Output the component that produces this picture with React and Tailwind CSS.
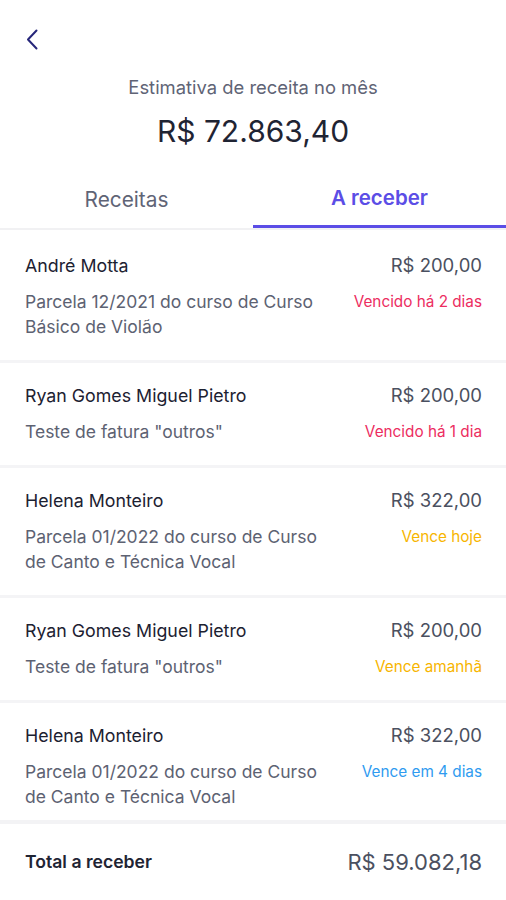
import React from "react";

const rows = [
  {
    name: "André Motta",
    amount: "R$ 200,00",
    desc: "Parcela 12/2021 do curso de Curso Básico de Violão",
    status: "Vencido há 2 dias",
    color: "text-[#ec2d5f]",
  },
  {
    name: "Ryan Gomes Miguel Pietro",
    amount: "R$ 200,00",
    desc: 'Teste de fatura "outros"',
    status: "Vencido há 1 dia",
    color: "text-[#ec2d5f]",
  },
  {
    name: "Helena Monteiro",
    amount: "R$ 322,00",
    desc: "Parcela 01/2022 do curso de Curso de Canto e Técnica Vocal",
    status: "Vence hoje",
    color: "text-[#f7b500]",
  },
  {
    name: "Ryan Gomes Miguel Pietro",
    amount: "R$ 200,00",
    desc: 'Teste de fatura "outros"',
    status: "Vence amanhã",
    color: "text-[#f7b500]",
  },
  {
    name: "Helena Monteiro",
    amount: "R$ 322,00",
    desc: "Parcela 01/2022 do curso de Curso de Canto e Técnica Vocal",
    status: "Vence em 4 dias",
    color: "text-[#2f9bf0]",
  },
];

function Row({ item, first }) {
  return (
    <div
      className={`bg-white pl-[25px] pr-[24px] pb-[21px] ${
        first ? "pt-[24px]" : "pt-[21px]"
      }`}
    >
      <div className="flex justify-between items-center h-[24px]">
        <span className="text-[17.8px] text-[#1c2131]">{item.name}</span>
        <span className="text-[18.5px] text-[#4b5060]">{item.amount}</span>
      </div>
      <div className="flex justify-between items-start mt-[11px]">
        <p className="w-[300px] text-[17.5px] leading-[25px] text-[#5d6272]">
          {item.desc}
        </p>
        <span className={`text-[15.3px] leading-[25px] ${item.color}`}>
          {item.status}
        </span>
      </div>
    </div>
  );
}

export default function App() {
  return (
    <div
      className="w-[506px] h-[900px] bg-white flex flex-col overflow-hidden"
      style={{ fontFamily: "Inter, 'Noto Sans', sans-serif" }}
    >
      <header>
        <div className="pt-[29px] pl-[26px]">
          <svg
            className="block"
            width="12"
            height="21"
            viewBox="0 0 12 21"
            fill="none"
          >
            <path
              d="M10.5 1.5 L2 10.5 L10.5 19.5"
              stroke="#26267a"
              strokeWidth="2"
              strokeLinecap="round"
              strokeLinejoin="round"
            />
          </svg>
        </div>
        <p className="mt-[23px] text-center text-[18.4px] leading-[28px] text-[#5f6476]">
          Estimativa de receita no mês
        </p>
        <p className="mt-[12px] text-center text-[30px] leading-[36px] text-[#1f2433]">
          R$ 72.863,40
        </p>
        <div className="mt-[22px] flex border-b-2 border-[#f1f1f3]">
          <button className="flex-1 h-[57px] flex items-center justify-center text-[20.8px] text-[#5f6476]">
            Receitas
          </button>
          <button className="flex-1 h-[57px] -mb-[2px] flex items-center justify-center text-[20.5px] font-semibold text-[#5b4de6] border-b-[3px] border-[#5b4de6]">
            A receber
          </button>
        </div>
      </header>

      <div className="flex-1 overflow-hidden bg-[#f4f4f6] flex flex-col gap-[3px]">
        {rows.map((item, i) => (
          <Row key={i} item={item} first={i === 0} />
        ))}
      </div>

      <footer className="h-[80px] shrink-0 flex items-center justify-between pl-[25px] pr-[24px] bg-white border-t-4 border-[#f3f3f5]">
        <span className="text-[17.6px] font-semibold text-[#1f2433]">
          Total a receber
        </span>
        <span className="text-[22px] text-[#4b5060]">R$ 59.082,18</span>
      </footer>
    </div>
  );
}
